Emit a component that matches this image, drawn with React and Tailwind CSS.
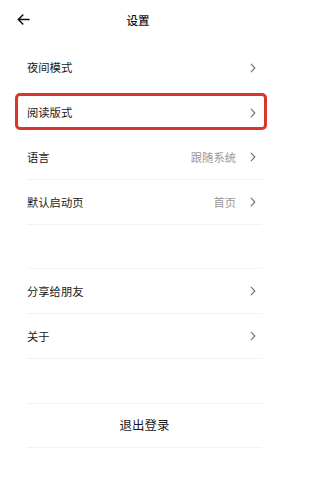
import React from "react";

const Chevron = () => (
  <svg width="6" height="10" viewBox="0 0 6 10" fill="none" className="shrink-0">
    <path d="M1.2 1.2l3.6 3.8-3.6 3.8" stroke="#707070" strokeWidth="1.1" strokeLinecap="round" strokeLinejoin="round" />
  </svg>
);

const Row = ({ label, value, highlight, border = true }) => (
  <div className={`relative flex items-center h-[45px] ${border ? "border-b border-[#f2f2f2]" : ""}`}>
    <span className="flex-1 text-[11.3px] text-[#1a1a1a]">{label}</span>
    {value && <span className="text-[11.3px] text-[#999] mr-[14px]">{value}</span>}
    <span className="mr-[6px]">
      <Chevron />
    </span>
    {highlight && (
      <div className="absolute left-[-12px] right-[-5px] top-[3px] bottom-[5px] border-[3px] border-[#d8362c] rounded-[5px] pointer-events-none" />
    )}
  </div>
);

export default function App() {
  return (
    <div
      className="w-[276px] h-[495px] bg-white overflow-hidden"
      style={{ fontFamily: '"Noto Sans CJK SC", "Noto Sans", sans-serif' }}
    >
      <div className="relative flex items-center justify-center h-[40px] pt-[1px]">
        <svg width="13" height="11" viewBox="0 0 13 11" fill="none" className="absolute left-[17px] top-[14px]">
          <path d="M12 5.5H1.5M5.8 1L1.3 5.5 5.8 10" stroke="#111" strokeWidth="1.6" strokeLinecap="round" strokeLinejoin="round" />
        </svg>
        <span className="text-[11.5px] font-medium text-[#111]">设置</span>
      </div>

      <div className="ml-[27px] mr-[14px] mt-[5px]">
        <Row label="夜间模式" border={false} />
        <Row label="阅读版式" highlight border={false} />
        <Row label="语言" value="跟随系统" />
        <Row label="默认启动页" value="首页" />
      </div>

      <div className="ml-[27px] mr-[14px] mt-[43px] border-t border-[#f5f5f5]">
        <Row label="分享给朋友" />
        <Row label="关于" />
      </div>

      <div className="ml-[27px] mr-[14px] mt-[44px] border-t border-b border-[#f2f2f2] h-[45px] flex items-center justify-center">
        <span className="text-[12.5px] text-[#1a1a1a]">退出登录</span>
      </div>
    </div>
  );
}
